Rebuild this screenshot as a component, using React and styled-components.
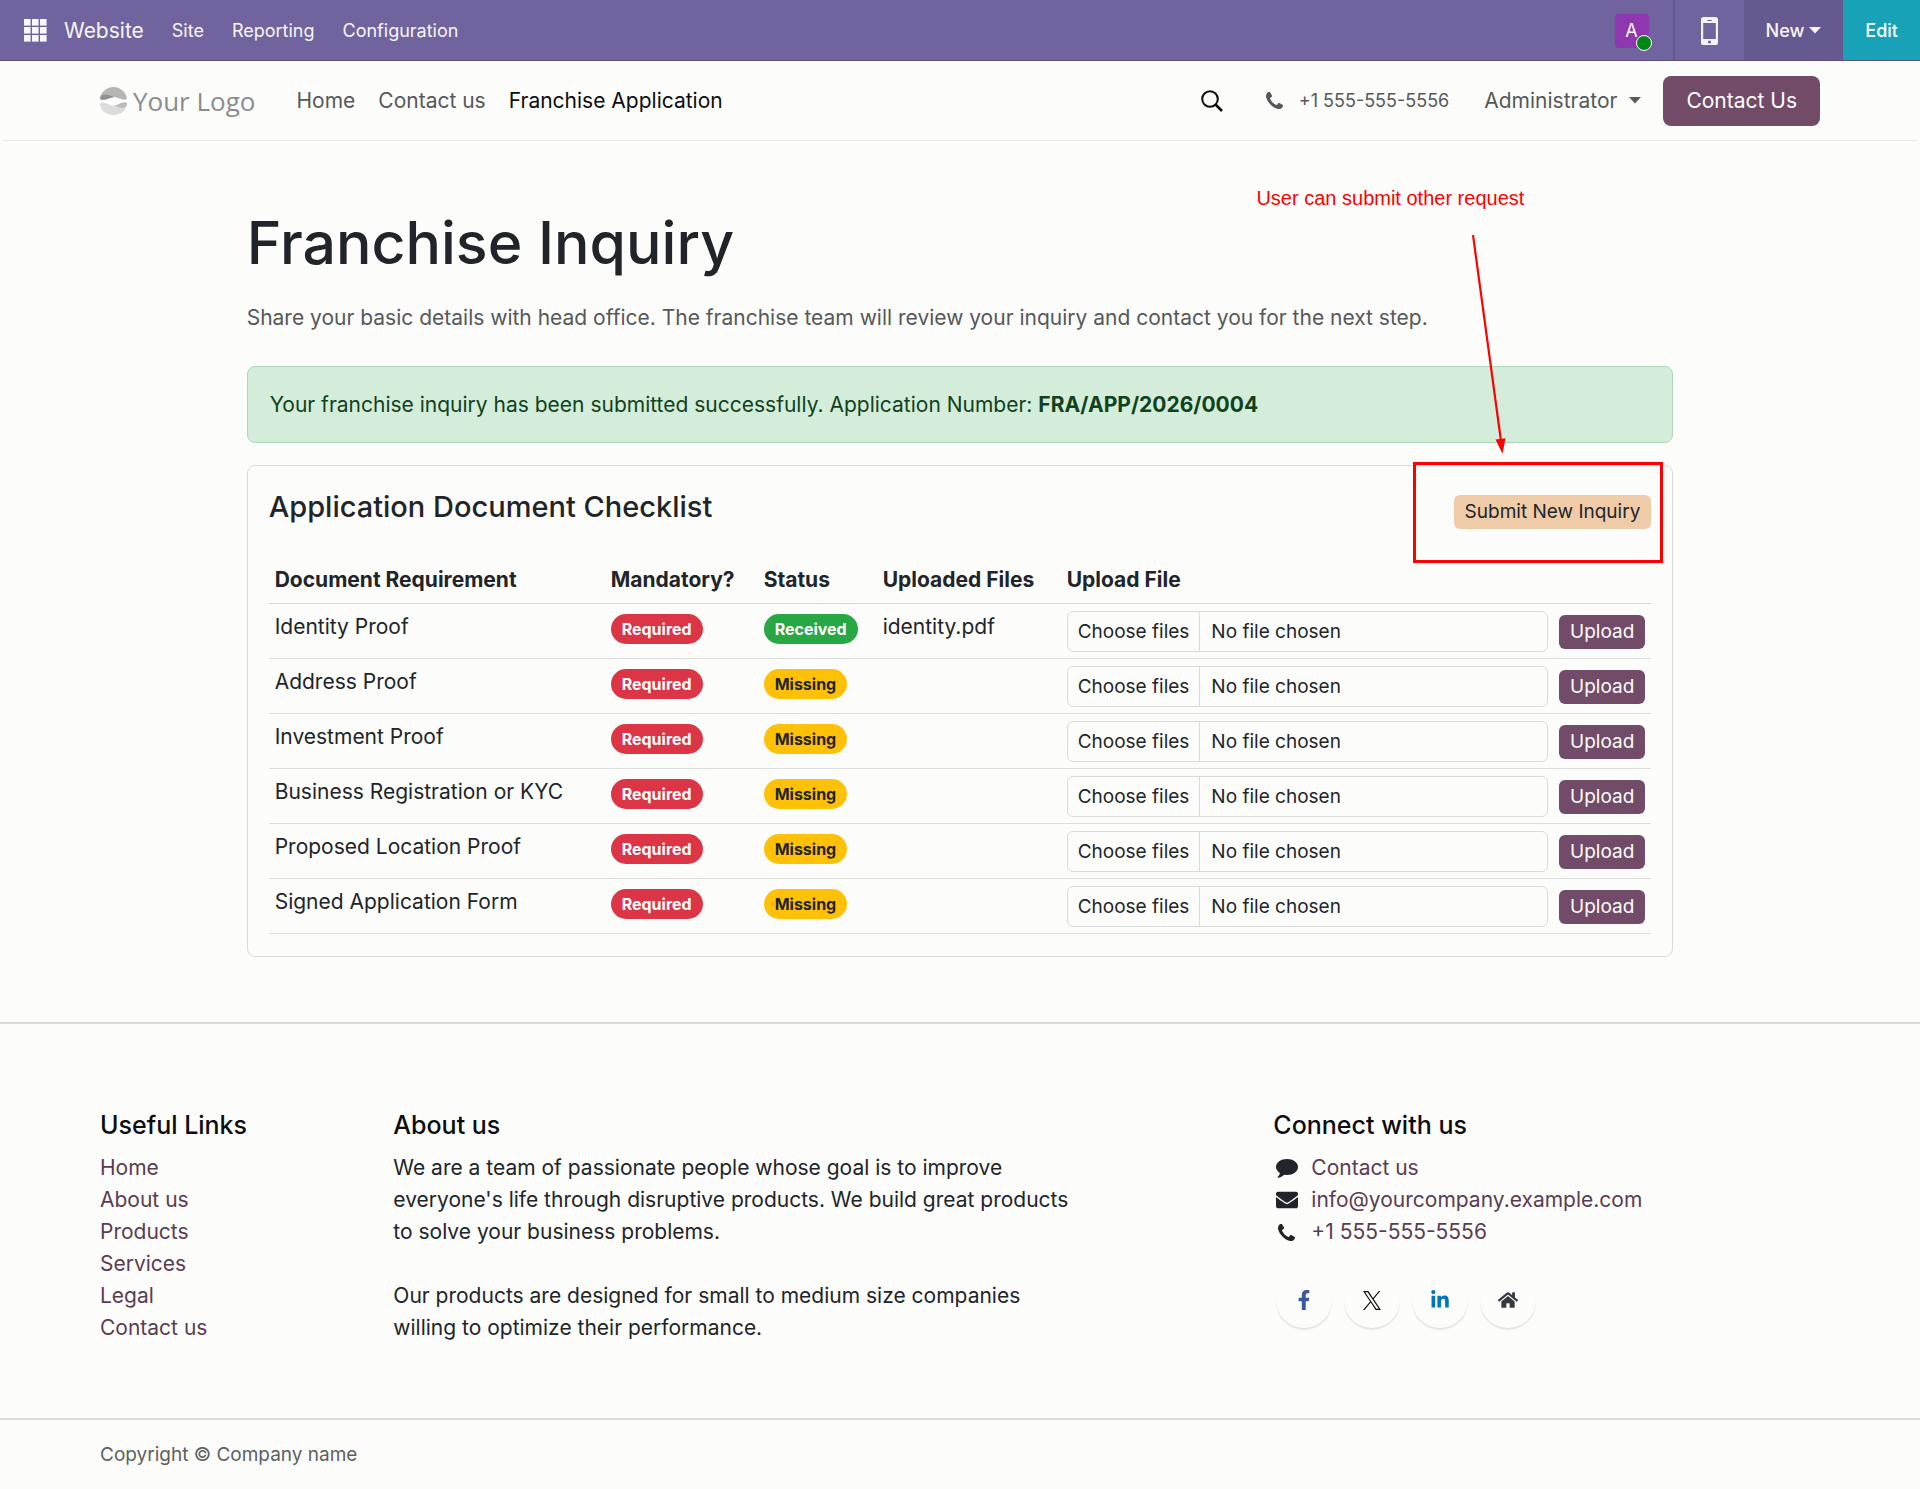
import React, { useState } from "react";
import styled, { createGlobalStyle, css } from "styled-components";
import { FaEnvelope, FaFacebookF, FaHome, FaLinkedinIn } from "react-icons/fa";

const GlobalStyle = createGlobalStyle`
  *, *::before, *::after { box-sizing: border-box; }
  body {
    margin: 0;
    background: #fcfcfa;
    color: #212529;
    font-family: Inter, "Liberation Sans", sans-serif;
    font-size: 21px;
    line-height: 32px;
  }
  a { color: inherit; text-decoration: none; }
  button { font: inherit; color: inherit; border: 0; background: none; padding: 0; cursor: pointer; }
  svg { display: block; flex: none; }
`;

/* ---------- Backend bar ---------- */

const SystemBar = styled.div`
  display: flex;
  justify-content: space-between;
  height: 61px;
  background: #71639e;
  box-shadow: inset 0 -1px #5a4f7f;
  color: #f8f7fa;
  font-size: 18px;
`;

const SystemMenu = styled.nav`
  display: flex;
  align-items: center;
  gap: 28px;
  padding-left: 24px;
`;

const Brand = styled.div`
  display: flex;
  align-items: center;
  gap: 17px;
  font-size: 21px;
`;

const SystemTools = styled.div`
  display: flex;
  align-items: stretch;
`;

const ToolButton = styled.button`
  display: flex;
  align-items: center;
  justify-content: center;
  gap: 5px;
  padding: 0 22px;
  font-weight: 500;
  box-shadow: inset 0 -1px #5a4f7f;
  ${(p) => p.$tone === "divided" && css`
    padding: 0 26px;
    border-left: 2px solid #65588f;
  `}
  ${(p) => p.$tone === "dark" && css`background: #66598f;`}
  ${(p) => p.$tone === "info" && css`background: #17a2b8; color: #fff;`}
`;

const AvatarButton = styled.button`
  padding: 0 24px 0 0;
`;

const Avatar = styled.span`
  position: relative;
  display: grid;
  place-items: center;
  width: 34px;
  height: 34px;
  border-radius: 4px;
  background: #8f37ae;
  color: #fff;
`;

const Presence = styled.span`
  position: absolute;
  right: -3px;
  bottom: -3px;
  width: 16px;
  height: 16px;
  border: 1px solid #fff;
  border-radius: 50%;
  background: #008817;
`;

/* ---------- Site header ---------- */

const Header = styled.header`
  display: flex;
  align-items: center;
  justify-content: space-between;
  height: 80px;
  margin: 0 3px;
  padding: 0 97px;
  border-bottom: 1px solid #e8e8e7;
`;

const HeaderGroup = styled.div`
  display: flex;
  align-items: center;
  gap: ${(p) => p.$gap}px;
`;

const Logo = styled.a`
  display: flex;
  align-items: center;
  gap: 6px;
  color: #8a8c8f;
  font-family: "Open Sans", "Liberation Sans", sans-serif;
  font-size: 26px;
`;

const SiteNav = styled.nav`
  display: flex;
  gap: 23px;
`;

const NavLink = styled.a`
  color: ${(p) => (p.$active ? "#0c0d0e" : "#56585b")};
`;

const IconButton = styled.button`
  color: #0c0d0e;
`;

const PhoneLink = styled.a`
  display: flex;
  align-items: center;
  gap: 16px;
  color: #56585b;
  font-size: 18px;
`;

const UserMenu = styled.button`
  display: flex;
  align-items: center;
  gap: 12px;
  color: #56585b;
`;

const ContactButton = styled.a`
  padding: 9px 23px;
  border-radius: 8px;
  background: #714b67;
  color: #fff;
`;

/* ---------- Main ---------- */

const Main = styled.main`
  display: grid;
  grid-template-columns: 1fr 10fr 1fr;
  padding: 65px 80px;
`;

const Content = styled.div`
  grid-column: 2;
  min-width: 0;
  padding: 0 20px;
`;

const Title = styled.h1`
  margin: 0 0 22px;
  font-size: 59px;
  font-weight: 500;
  line-height: 74px;
`;

const Lead = styled.p`
  margin: 0 0 32px;
  color: #56585b;
`;

const Alert = styled.div`
  margin-bottom: 22px;
  padding: 22px 22px 21px;
  border: 1px solid #a8dab5;
  border-radius: 8px;
  background: #d4ecda;
  color: #10421c;
`;

const Card = styled.section`
  position: relative;
  padding: 21px 21px 22px;
  border: 1px solid #dadcdc;
  border-radius: 8px;
`;

const CardHead = styled.div`
  display: flex;
  align-items: center;
  justify-content: space-between;
  height: 49px;
  margin-bottom: 21px;
`;

const CardTitle = styled.h2`
  margin: 0;
  padding-bottom: 10px;
  font-size: 29px;
  font-weight: 500;
  line-height: 39px;
`;

const SmallButton = styled.button`
  height: 34px;
  padding: 0 11px;
  border-radius: 6px;
  background: ${(p) => (p.$soft ? "#f0cba8" : "#714b67")};
  color: ${(p) => (p.$soft ? "#212529" : "#fff")};
  font-size: 19px;
  line-height: 34px;
  white-space: nowrap;
`;

const Table = styled.table`
  width: 100%;
  table-layout: fixed;
  border-collapse: separate;
  border-spacing: 0;
`;

const Col = styled.col`
  width: ${(p) => (p.$width ? `${p.$width}px` : "auto")};
`;

const HeadCell = styled.th`
  padding: 7px 6px;
  border-bottom: 1px solid #d5d7da;
  text-align: left;
  font-weight: 700;
`;

const Cell = styled.td`
  padding: 7px 6px 6px;
  border-bottom: 1px solid #dcdddd;
  vertical-align: top;
`;

const badgeTones = {
  danger: ["#dc3545", "#fff"],
  success: ["#28a745", "#fff"],
  warning: ["#ffc107", "#212529"],
};

const Badge = styled.span`
  display: block;
  width: max-content;
  margin-top: 3px;
  padding: 0 11px;
  border-radius: 15px;
  background: ${(p) => badgeTones[p.$tone][0]};
  color: ${(p) => badgeTones[p.$tone][1]};
  font-size: 16px;
  font-weight: 700;
  line-height: 30px;
`;

const UploadForm = styled.form`
  display: flex;
  align-items: center;
  gap: 11px;
`;

const FileField = styled.label`
  position: relative;
  display: flex;
  flex: 1;
  min-width: 0;
  height: 41px;
  border: 1px solid #dadcdc;
  border-radius: 6px;
  font-size: 19px;
  line-height: 39px;
  cursor: pointer;
`;

const FileInput = styled.input`
  position: absolute;
  inset: 0;
  width: 100%;
  opacity: 0;
  cursor: pointer;
`;

const FilePick = styled.span`
  padding: 0 10px;
  border-right: 1px solid #dadcdc;
`;

const FileName = styled.span`
  padding: 0 11px;
`;

/* ---------- Callout drawn over the card ---------- */

const CalloutBox = styled.div`
  position: absolute;
  top: -4px;
  right: 9px;
  width: 250px;
  height: 101px;
  border: 3px solid #fe0000;
  pointer-events: none;
`;

const CalloutArrow = styled.svg`
  position: absolute;
  top: -232px;
  right: 164px;
  pointer-events: none;
`;

const CalloutText = styled.p`
  position: absolute;
  top: -284px;
  right: 148px;
  margin: 0;
  color: #fe0000;
  font-family: "Liberation Sans", Arial, sans-serif;
  font-size: 20px;
  white-space: nowrap;
`;

/* ---------- Footer ---------- */

const Footer = styled.footer`
  border-top: 2px solid #dadad9;
`;

const FooterGrid = styled.div`
  display: grid;
  grid-template-columns: 2fr 5fr 1fr 4fr;
  padding: 85px 80px 42px;
`;

const FooterColumn = styled.div`
  grid-column: ${(p) => p.$col};
  min-width: 0;
  padding: 0 20px;
`;

const FooterHeading = styled.h3`
  margin: 0 0 11px;
  color: #0c0d0e;
  font-size: 25px;
  font-weight: 500;
  line-height: 32px;
`;

const LinkList = styled.ul`
  margin: 0;
  padding: 0;
  list-style: none;
`;

const FooterLink = styled.a`
  color: #5a3c52;
`;

const Paragraph = styled.p`
  margin: 0 0 32px;
`;

const ContactItem = styled.li`
  display: grid;
  grid-template-columns: 27px 1fr;
  align-items: center;
  justify-items: start;
  gap: 11px;

  svg { justify-self: center; }
`;

const Socials = styled.div`
  display: flex;
  gap: 12px;
  padding: 24px 3px 0;
`;

const SocialLink = styled.a`
  display: grid;
  place-items: center;
  width: 56px;
  height: 56px;
  border-radius: 50%;
  box-shadow: 0 2px 1px rgba(0, 0, 0, 0.09);
  color: ${(p) => p.$color};
`;

const Copyright = styled.div`
  padding: 19px 100px 17px;
  border-top: 2px solid #dadad9;
  color: #5d5f61;
  font-size: 19px;
`;

/* ---------- Drawings ---------- */

const AppsIcon = () => (
  <svg width="23" height="23" viewBox="0 0 23 23" fill="currentColor" aria-hidden="true">
    {[0, 8, 16].map((y) => [0, 8, 16].map((x) => <rect key={`${x}-${y}`} x={x} y={y} width="6.6" height="6.6" />))}
  </svg>
);

const MobileIcon = () => (
  <svg width="17" height="28" viewBox="0 0 17 28" aria-hidden="true">
    <rect width="17" height="28" rx="2.6" fill="#f4f3f7" />
    <rect x="2.2" y="6" width="12.6" height="16" fill="#71639e" />
    <rect x="6.2" y="3" width="4.6" height="1" fill="#71639e" />
    <circle cx="8.5" cy="25" r="1.6" fill="#71639e" />
  </svg>
);

const Caret = () => (
  <svg width="12" height="7" viewBox="0 0 12 7" fill="currentColor" aria-hidden="true">
    <path d="M0 0h12L6 6.6z" />
  </svg>
);

const LogoMark = () => (
  <svg width="27" height="28" viewBox="0 0 27 28" aria-hidden="true">
    <path d="M0 11C2 4 7 0 13.500 0S25 4 27 11c0 1.500-2 2-4 1.600-4-.8-6-2.600-10-2.600S5 13 2 12.600C0.500 12.500 0 12 0 11z" fill="#b5b5b6" />
    <path d="M0 11c.5-3 4-4 8-3 2 .6 4 1.500 6 2.200-4 0-7 2.800-11 2.500-2-.1-3-.5-3-1.700z" fill="#8f9093" />
    <path d="M0 17.500C0 16 1.500 15.500 4 15.700c4 .4 6 3 10 3.100 4 0 7-3.400 11-3.400 1.500 0 2 .6 2 1.800C26 24 20 28 13.500 28S1 24 0 17.500z" fill="#dadbdb" />
    <path d="M14 18.700c4-.4 7-3.700 11-3.500 1.500 0 2 .7 2 1.800-.3 3-3.500 4.200-7 3.400-2-.5-4-1.400-6-1.700z" fill="#b9babb" />
  </svg>
);

const SearchIcon = () => (
  <svg width="22" height="22" viewBox="0 0 22 22" fill="none" stroke="currentColor" strokeWidth="2" aria-hidden="true">
    <circle cx="9" cy="9" r="7.800" />
    <path d="M14.500 14.500l6.500 6.500" strokeWidth="2.600" />
  </svg>
);

const PhoneIcon = () => (
  <svg width="17" height="17" viewBox="0 128 1408 1408" fill="currentColor" aria-hidden="true">
    <path d="M1408 1240q0 27-10 70.500t-21 68.500q-21 50-122 106-94 51-186 51-27 0-53-3.500t-57.500-12.500-47-14.500-55.500-20.500-49-18q-98-35-175-83-127-79-264-216t-216-264q-48-77-83-175-3-9-18-49t-20.500-55.500-14.500-47-12.500-57.500-3.500-53q0-92 51-186 56-101 106-122 25-11 68.500-21t70.500-10q14 0 21 3 18 6 53 76 11 19 30 54t35 63.500 31 53.500q3 4 17.500 25t21.500 35.500 7 28.500q0 20-28.500 50t-62 55-62 53-28.500 46q0 9 5 22.500t8.500 20.500 14 24 11.500 19q76 137 174 235t235 174q2 1 19 11.500t24 14 20.500 8.500 22.500 5q18 0 46-28.500t53-62 55-62 50-28.500q14 0 28.500 7t35.500 21.500 25 17.500q25 15 53.500 31t63.500 35 54 30q70 35 76 53 3 7 3 21z" />
  </svg>
);

const CommentIcon = () => (
  <svg width="22" height="19" viewBox="0 0 22 19" fill="currentColor" aria-hidden="true">
    <path d="M11 0c6 0 11 3.500 11 8s-5 8-11 8c-.9 0-1.800-.1-2.700-.2C6.500 17.400 4.400 18.500 2 18.800c-.5 0-.6-.5-.3-.9 1-1.100 1.900-2 2.200-4C1.500 12.500 0 10.400 0 8c0-4.500 5-8 11-8z" />
  </svg>
);

const XIcon = () => (
  <svg width="18" height="19" viewBox="0 0 24 24" preserveAspectRatio="none" fill="currentColor" aria-hidden="true">
    <path d="M14.283 10.162L23.218 0h-2.117l-7.758 8.824L7.147 0H0l9.370 13.343L0 24h2.117l8.192-9.318L16.853 24H24l-9.717-13.838zM11.383 13.461L2.880 1.562h3.252l14.970 20.950h-3.252l-6.467-9.051z" />
  </svg>
);

/* ---------- Data ---------- */

const documents = [
  { name: "Identity Proof", file: "identity.pdf" },
  { name: "Address Proof" },
  { name: "Investment Proof" },
  { name: "Business Registration or KYC" },
  { name: "Proposed Location Proof" },
  { name: "Signed Application Form" },
];

const usefulLinks = ["Home", "About us", "Products", "Services", "Legal", "Contact us"];

function DocumentRow({ name, file }) {
  const [chosen, setChosen] = useState("");
  return (
    <tr>
      <Cell>{name}</Cell>
      <Cell><Badge $tone="danger">Required</Badge></Cell>
      <Cell><Badge $tone={file ? "success" : "warning"}>{file ? "Received" : "Missing"}</Badge></Cell>
      <Cell>{file}</Cell>
      <Cell>
        <UploadForm onSubmit={(e) => e.preventDefault()}>
          <FileField>
            <FilePick>Choose files</FilePick>
            <FileName>{chosen || "No file chosen"}</FileName>
            <FileInput
              type="file"
              multiple
              onChange={(e) => setChosen(Array.from(e.target.files).map((f) => f.name).join(", "))}
            />
          </FileField>
          <SmallButton type="submit">Upload</SmallButton>
        </UploadForm>
      </Cell>
    </tr>
  );
}

export default function App() {
  return (
    <>
      <GlobalStyle />
      <SystemBar>
        <SystemMenu>
          <Brand>
            <button type="button" aria-label="Apps"><AppsIcon /></button>
            <a href="#website">Website</a>
          </Brand>
          <a href="#site">Site</a>
          <a href="#reporting">Reporting</a>
          <a href="#configuration">Configuration</a>
        </SystemMenu>
        <SystemTools>
          <AvatarButton type="button"><Avatar>A<Presence /></Avatar></AvatarButton>
          <ToolButton type="button" $tone="divided" aria-label="Mobile preview"><MobileIcon /></ToolButton>
          <ToolButton type="button" $tone="dark">New<Caret /></ToolButton>
          <ToolButton type="button" $tone="info">Edit</ToolButton>
        </SystemTools>
      </SystemBar>

      <Header>
        <HeaderGroup $gap={41}>
          <Logo href="#home"><LogoMark />Your Logo</Logo>
          <SiteNav>
            <NavLink href="#home">Home</NavLink>
            <NavLink href="#contact">Contact us</NavLink>
            <NavLink href="#franchise" $active>Franchise Application</NavLink>
          </SiteNav>
        </HeaderGroup>
        <HeaderGroup $gap={22}>
          <HeaderGroup $gap={43}>
            <IconButton type="button" aria-label="Search"><SearchIcon /></IconButton>
            <HeaderGroup $gap={35}>
              <PhoneLink href="tel:+15555555556"><PhoneIcon />+1 555-555-5556</PhoneLink>
              <UserMenu type="button">Administrator<Caret /></UserMenu>
            </HeaderGroup>
          </HeaderGroup>
          <ContactButton href="#contact">Contact Us</ContactButton>
        </HeaderGroup>
      </Header>

      <Main>
        <Content>
          <Title>Franchise Inquiry</Title>
          <Lead>Share your basic details with head office. The franchise team will review your inquiry and contact you for the next step.</Lead>
          <Alert role="status">
            Your franchise inquiry has been submitted successfully. Application Number: <strong>FRA/APP/2026/0004</strong>
          </Alert>
          <Card>
            <CardHead>
              <CardTitle>Application Document Checklist</CardTitle>
              <SmallButton type="button" $soft>Submit New Inquiry</SmallButton>
            </CardHead>
            <Table>
              <colgroup>
                <Col $width={336} />
                <Col $width={153} />
                <Col $width={119} />
                <Col $width={184} />
                <Col />
              </colgroup>
              <thead>
                <tr>
                  <HeadCell>Document Requirement</HeadCell>
                  <HeadCell>Mandatory?</HeadCell>
                  <HeadCell>Status</HeadCell>
                  <HeadCell>Uploaded Files</HeadCell>
                  <HeadCell>Upload File</HeadCell>
                </tr>
              </thead>
              <tbody>
                {documents.map((d) => <DocumentRow key={d.name} {...d} />)}
              </tbody>
            </Table>
            <CalloutText>User can submit other request</CalloutText>
            <CalloutArrow width="36" height="220" viewBox="0 0 36 220" aria-hidden="true">
              <path d="M1 1l28 206" stroke="#fe0000" strokeWidth="2.200" />
              <path d="M23.500 205.500l10-1.200-3 15.500z" fill="#fe0000" />
            </CalloutArrow>
            <CalloutBox />
          </Card>
        </Content>
      </Main>

      <Footer>
        <FooterGrid>
          <FooterColumn $col={1}>
            <FooterHeading>Useful Links</FooterHeading>
            <LinkList>
              {usefulLinks.map((l) => (
                <li key={l}><FooterLink href={`#${l.toLowerCase().replace(" ", "-")}`}>{l}</FooterLink></li>
              ))}
            </LinkList>
          </FooterColumn>
          <FooterColumn $col={2}>
            <FooterHeading>About us</FooterHeading>
            <Paragraph>
              We are a team of passionate people whose goal is to improve everyone's life through disruptive products. We build great products to solve your business problems.
            </Paragraph>
            <Paragraph>
              Our products are designed for small to medium size companies willing to optimize their performance.
            </Paragraph>
          </FooterColumn>
          <FooterColumn $col={4}>
            <FooterHeading>Connect with us</FooterHeading>
            <LinkList>
              <ContactItem><CommentIcon /><FooterLink href="#contact">Contact us</FooterLink></ContactItem>
              <ContactItem><FaEnvelope size={22} /><FooterLink href="mailto:info@yourcompany.example.com">info@yourcompany.example.com</FooterLink></ContactItem>
              <ContactItem><PhoneIcon /><FooterLink href="tel:+15555555556">+1 555-555-5556</FooterLink></ContactItem>
            </LinkList>
            <Socials>
              <SocialLink href="#facebook" aria-label="Facebook" $color="#3b5998"><FaFacebookF size={20} /></SocialLink>
              <SocialLink href="#x" aria-label="X" $color="#111"><XIcon /></SocialLink>
              <SocialLink href="#linkedin" aria-label="LinkedIn" $color="#0077b5"><FaLinkedinIn size={20} /></SocialLink>
              <SocialLink href="#home" aria-label="Home page" $color="#343a40"><FaHome size={20} /></SocialLink>
            </Socials>
          </FooterColumn>
        </FooterGrid>
        <Copyright>Copyright © Company name</Copyright>
      </Footer>
    </>
  );
}
